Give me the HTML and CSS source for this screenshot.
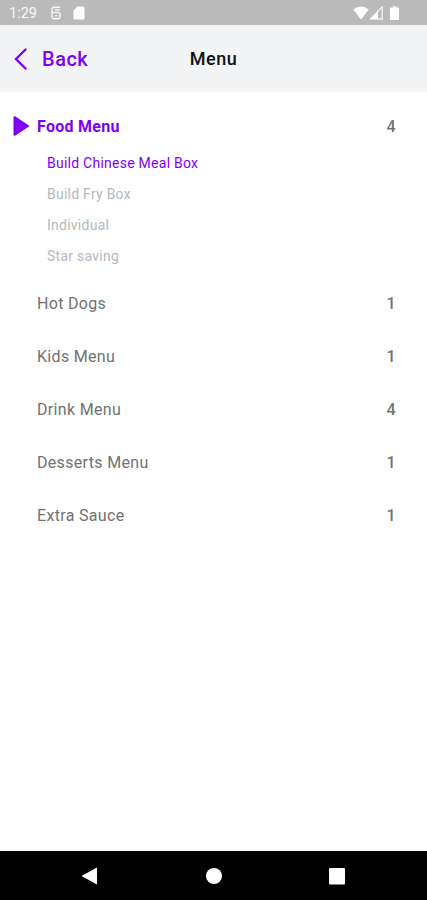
FILE: index.html
```html
<!DOCTYPE html>
<html lang="en">
<head>
<meta charset="UTF-8" />
<meta name="viewport" content="width=device-width, initial-scale=1" />
<title>Menu</title>
<link rel="stylesheet" href="styles.css">
</head>
<body>

<div class="status-bar">
  <span class="time">1:29</span>
  <svg class="app-icon" viewBox="0 0 12 14" aria-hidden="true">
    <path d="M10 1.200H4.500Q2 1.200 2 3.500V10.500Q2 12.800 4.500 12.800H7.500Q10 12.800 10 10.500V8.500Q10 6.600 7.500 6.600H2M5 3.900h5M5 9.700h2.500" />
  </svg>
  <svg class="sd-icon" viewBox="0 0 12 14" aria-hidden="true">
    <path d="M4.500 0.500H10a1.500 1.500 0 0 1 1.500 1.500v10a1.500 1.500 0 0 1-1.500 1.500H2A1.500 1.500 0 0 1 .5 12V4.500z" />
  </svg>
  <div class="signals">
    <svg class="wifi-icon" viewBox="0 0 16 14" aria-hidden="true">
      <path d="M8 13.500L.3 3.600Q8-2.600 15.700 3.600z" />
    </svg>
    <svg class="cell-icon" viewBox="0 0 14 14" aria-hidden="true">
      <path class="cell-fill" d="M0 13.500L9 4.500v9z" />
      <path class="cell-line" d="M8.500 5.500L13.200 1v12H8.500" />
    </svg>
    <svg class="battery-icon" viewBox="0 0 9 14" aria-hidden="true">
      <path d="M3 0h3v1.500h2a1 1 0 0 1 1 1V13a1 1 0 0 1-1 1H1a1 1 0 0 1-1-1V2.500a1 1 0 0 1 1-1h2z" />
    </svg>
  </div>
</div>

<header class="header">
  <a class="back" href="#">
    <svg class="chevron" viewBox="0 0 13 22" aria-hidden="true">
      <path d="M11.500 1.500L2 11l9.500 9.500" />
    </svg>
    <span>Back</span>
  </a>
  <h1 class="title">Menu</h1>
</header>

<main class="menu">
  <div class="menu-row active">
    <svg class="arrow" viewBox="0 0 17 20" aria-hidden="true">
      <path d="M2.500 1.200L16 10 2.500 18.800z" />
    </svg>
    <span class="name">Food Menu</span>
    <span class="count">4</span>
  </div>
  <ul class="submenu">
    <li class="selected">Build Chinese Meal Box</li>
    <li>Build Fry Box</li>
    <li>Individual</li>
    <li>Star saving</li>
  </ul>
  <div class="menu-row"><span class="name">Hot Dogs</span><span class="count">1</span></div>
  <div class="menu-row"><span class="name">Kids Menu</span><span class="count">1</span></div>
  <div class="menu-row"><span class="name">Drink Menu</span><span class="count">4</span></div>
  <div class="menu-row"><span class="name">Desserts Menu</span><span class="count">1</span></div>
  <div class="menu-row"><span class="name">Extra Sauce</span><span class="count">1</span></div>
</main>

<nav class="nav-bar">
  <svg viewBox="0 0 18 18" aria-label="Back"><path d="M16 .5v17L.5 9z" /></svg>
  <svg viewBox="0 0 18 18" aria-label="Home"><circle cx="9" cy="9" r="8" /></svg>
  <svg viewBox="0 0 18 18" aria-label="Recents"><rect x="1" y="1" width="16" height="16.500" rx="1" /></svg>
</nav>

</body>
</html>
```

FILE: styles.css
```css
* {
  box-sizing: border-box;
}
body {
  margin: 0;
  height: 900px;
  display: flex;
  flex-direction: column;
  background: #fff;
  font-family: Roboto, sans-serif;
  color: #727272;
}
svg {
  display: block;
  flex: none;
}
.status-bar {
  height: 25px;
  padding: 1px 27px 0 9px;
  display: flex;
  align-items: center;
  background: #bababa;
  color: #f5f5f5;
  fill: #fff;
}
.time {
  width: 41px;
  font-size: 14.5px;
}
.app-icon {
  width: 12px;
  height: 14px;
  fill: none;
  stroke: #f2f2f2;
  stroke-width: 1.5;
}
.sd-icon {
  width: 12px;
  height: 14px;
  margin-left: 11px;
}
.signals {
  margin-left: auto;
  display: flex;
}
.wifi-icon {
  width: 16px;
  height: 14px;
}
.cell-icon {
  width: 14px;
  height: 14px;
}
.cell-line {
  fill: none;
  stroke: #f2f2f2;
  stroke-width: 1.3;
}
.battery-icon {
  width: 9px;
  height: 14px;
  margin: 0 1px 0 7px;
}
.header {
  height: 67px;
  padding: 0 14px;
  display: grid;
  grid-template-columns: 1fr auto 1fr;
  align-items: center;
  background: #f3f4f6;
}
.back {
  display: flex;
  align-items: center;
  gap: 15px;
  color: #7f00f5;
  font-size: 20px;
  font-weight: 500;
  letter-spacing: 0.5px;
  text-decoration: none;
}
.chevron {
  width: 13px;
  height: 22px;
  fill: none;
  stroke: #7f00f5;
  stroke-width: 2.4;
  stroke-linecap: round;
}
.title {
  margin: 0;
  color: #111;
  font-size: 18px;
  font-weight: 500;
  letter-spacing: 0.5px;
}
.menu {
  flex: 1;
  padding: 7px 31px 0 12px;
}
.menu-row {
  height: 53px;
  padding-left: 25px;
  display: flex;
  align-items: center;
  font-size: 16px;
  letter-spacing: 0.32px;
}
.count {
  margin-left: auto;
  font-weight: 500;
}
.active {
  height: 54px;
  margin-bottom: -5px;
  padding-left: 0;
}
.active .name {
  color: #7f00f5;
  font-weight: 700;
  letter-spacing: 0.28px;
}
.arrow {
  width: 17px;
  height: 20px;
  margin-right: 8px;
  fill: #7f00f5;
  stroke: #7f00f5;
  stroke-width: 2;
  stroke-linejoin: round;
}
.submenu {
  margin: 0;
  padding: 0 0 5px 35px;
  list-style: none;
  color: #b4b9bf;
  font-size: 14px;
  letter-spacing: 0.25px;
}
.submenu li {
  height: 31px;
  line-height: 31px;
}
.submenu .selected {
  color: #7f00f5;
}
.nav-bar {
  height: 49px;
  padding: 0 81px;
  display: flex;
  justify-content: space-between;
  align-items: center;
  background: #000;
  fill: #fff;
}
.nav-bar svg {
  width: 18px;
  height: 18px;
}
```
